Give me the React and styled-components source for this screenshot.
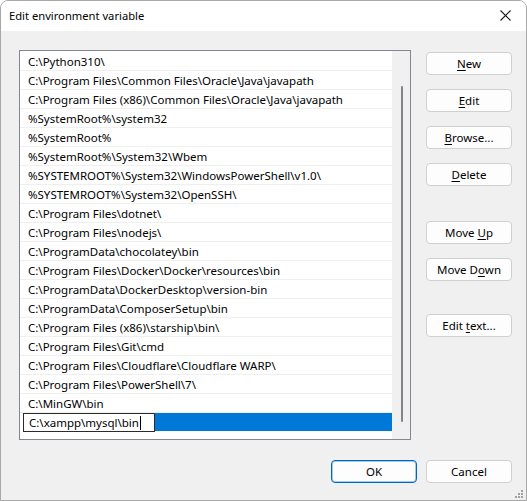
import React from "react";
import styled, { createGlobalStyle } from "styled-components";

const Global = createGlobalStyle`
  html, body { margin: 0; padding: 0; background: #ffffff; }
  body { font-family: "Noto Sans", "Liberation Sans", sans-serif; }
  * { box-sizing: border-box; }
`;

const Window = styled.div`
  position: relative;
  width: 527px;
  height: 501px;
  border: 1px solid #a8a8a8;
  border-radius: 8px 8px 0 0;
  overflow: hidden;
  display: flex;
  flex-direction: column;
  background: #f0f0f0;
  font-family: "Noto Sans", "Liberation Sans", sans-serif;
  font-size: 11.5px;
  color: #000;
`;

const TitleBar = styled.div`
  height: 30px;
  background: #ffffff;
  display: flex;
  align-items: center;
  justify-content: space-between;
  padding: 0 0 0 8px;
`;

const Title = styled.div`
  font-size: 11.2px;
  color: #000;
  margin-top: -1px;
`;

const CloseBtn = styled.div`
  width: 46px;
  height: 30px;
  display: flex;
  align-items: center;
  justify-content: center;
  margin-right: -2px;
  margin-top: -1px;
`;

const Body = styled.div`
  flex: 1;
  display: flex;
  flex-direction: column;
  padding: 19px 14px 0 18px;
`;

const TopRow = styled.div`
  display: flex;
  align-items: flex-start;
`;

const ListBox = styled.div`
  width: 392px;
  height: 390px;
  border: 1px solid #828790;
  background: #ffffff;
  display: flex;
`;

const Rows = styled.div`
  width: 372px;
  padding-top: 1px;
  display: flex;
  flex-direction: column;
`;

const Row = styled.div`
  height: 19px;
  border-bottom: 1px solid ${(p) => (p.$selected ? "#ffffff" : "#efefef")};
  display: flex;
  align-items: center;
  padding-left: ${(p) => (p.$selected ? "3px" : "8px")};
  background: ${(p) => (p.$selected ? "#0078d7" : "transparent")};
  background-clip: content-box;
  white-space: nowrap;
  line-height: 18px;
`;

const RowText = styled.span`
  margin-top: 2px;
`;

const EditBox = styled.div`
  width: 132px;
  height: 19px;
  margin-top: 1px;
  border: 1px solid #2b2b2b;
  background: #ffffff;
  display: flex;
  align-items: center;
  padding-left: 5px;
  line-height: 16px;
`;

const EditText = styled.span`
  margin-top: 1px;
`;

const Caret = styled.span`
  display: inline-block;
  width: 1px;
  height: 14px;
  background: #000;
  margin-left: 1px;
`;

const ScrollTrack = styled.div`
  width: 18px;
  background: #f0f0f0;
  display: flex;
  justify-content: center;
  padding: 35px 0 17px 1px;
`;

const Thumb = styled.div`
  width: 2px;
  border-radius: 1px;
  background: #858585;
`;

const ButtonColumn = styled.div`
  margin-left: 15px;
  padding-top: 2px;
  display: flex;
  flex-direction: column;
`;

const Button = styled.button`
  width: 86px;
  height: 23px;
  margin-top: ${(p) => p.$gap || 0}px;
  border: 1px solid ${(p) => (p.$primary ? "#0067c0" : "#d0d0d0")};
  box-shadow: ${(p) => (p.$primary ? "inset 0 0 0 1px rgba(0,103,192,0.35)" : "none")};
  border-radius: 4px;
  background: #fdfdfd;
  font-family: "Noto Sans", "Liberation Sans", sans-serif;
  font-size: 11.5px;
  color: #000;
  padding: 0;
  display: flex;
  align-items: center;
  justify-content: center;
  line-height: 16px;
  cursor: default;
`;

const U = styled.span`
  text-decoration: underline;
  text-underline-offset: 2px;
`;

const BottomRow = styled.div`
  margin-top: 20px;
  display: flex;
  justify-content: flex-end;
  gap: 9px;
`;

const Grip = styled.svg`
  position: absolute;
  right: 2px;
  bottom: 1px;
`;

const paths = [
  "C:\\Python310\\",
  "C:\\Program Files\\Common Files\\Oracle\\Java\\javapath",
  "C:\\Program Files (x86)\\Common Files\\Oracle\\Java\\javapath",
  "%SystemRoot%\\system32",
  "%SystemRoot%",
  "%SystemRoot%\\System32\\Wbem",
  "%SYSTEMROOT%\\System32\\WindowsPowerShell\\v1.0\\",
  "%SYSTEMROOT%\\System32\\OpenSSH\\",
  "C:\\Program Files\\dotnet\\",
  "C:\\Program Files\\nodejs\\",
  "C:\\ProgramData\\chocolatey\\bin",
  "C:\\Program Files\\Docker\\Docker\\resources\\bin",
  "C:\\ProgramData\\DockerDesktop\\version-bin",
  "C:\\ProgramData\\ComposerSetup\\bin",
  "C:\\Program Files (x86)\\starship\\bin\\",
  "C:\\Program Files\\Git\\cmd",
  "C:\\Program Files\\Cloudflare\\Cloudflare WARP\\",
  "C:\\Program Files\\PowerShell\\7\\",
  "C:\\MinGW\\bin",
];

export default function App() {
  return (
    <>
      <Global />
      <Window>
        <TitleBar>
          <Title>Edit environment variable</Title>
          <CloseBtn>
            <svg width="11" height="11" viewBox="0 0 11 11">
              <path d="M0.5 0.5 L10.5 10.5 M10.5 0.5 L0.5 10.5" stroke="#1a1a1a" strokeWidth="1.1" fill="none" />
            </svg>
          </CloseBtn>
        </TitleBar>
        <Body>
          <TopRow>
            <ListBox>
              <Rows>
                {paths.map((p) => (
                  <Row key={p}>
                    <RowText>{p}</RowText>
                  </Row>
                ))}
                <Row $selected>
                  <EditBox>
                    <EditText>C:\xampp\mysql\bin</EditText>
                    <Caret />
                  </EditBox>
                </Row>
              </Rows>
              <ScrollTrack>
                <Thumb />
              </ScrollTrack>
            </ListBox>
            <ButtonColumn>
              <Button><U>N</U>ew</Button>
              <Button $gap={14}><U>E</U>dit</Button>
              <Button $gap={14}><U>B</U>rowse...</Button>
              <Button $gap={14}><U>D</U>elete</Button>
              <Button $gap={35}>Move&nbsp;<U>U</U>p</Button>
              <Button $gap={14}>Move D<U>o</U>wn</Button>
              <Button $gap={33}>Edit&nbsp;<U>t</U>ext...</Button>
            </ButtonColumn>
          </TopRow>
          <BottomRow>
            <Button $primary>OK</Button>
            <Button>Cancel</Button>
          </BottomRow>
        </Body>
        <Grip width="10" height="10" viewBox="0 0 10 10">
          <g fill="#a0a0a0">
            <rect x="7" y="1" width="2" height="2" />
            <rect x="4" y="4" width="2" height="2" />
            <rect x="7" y="4" width="2" height="2" />
            <rect x="1" y="7" width="2" height="2" />
            <rect x="4" y="7" width="2" height="2" />
            <rect x="7" y="7" width="2" height="2" />
          </g>
        </Grip>
      </Window>
    </>
  );
}
